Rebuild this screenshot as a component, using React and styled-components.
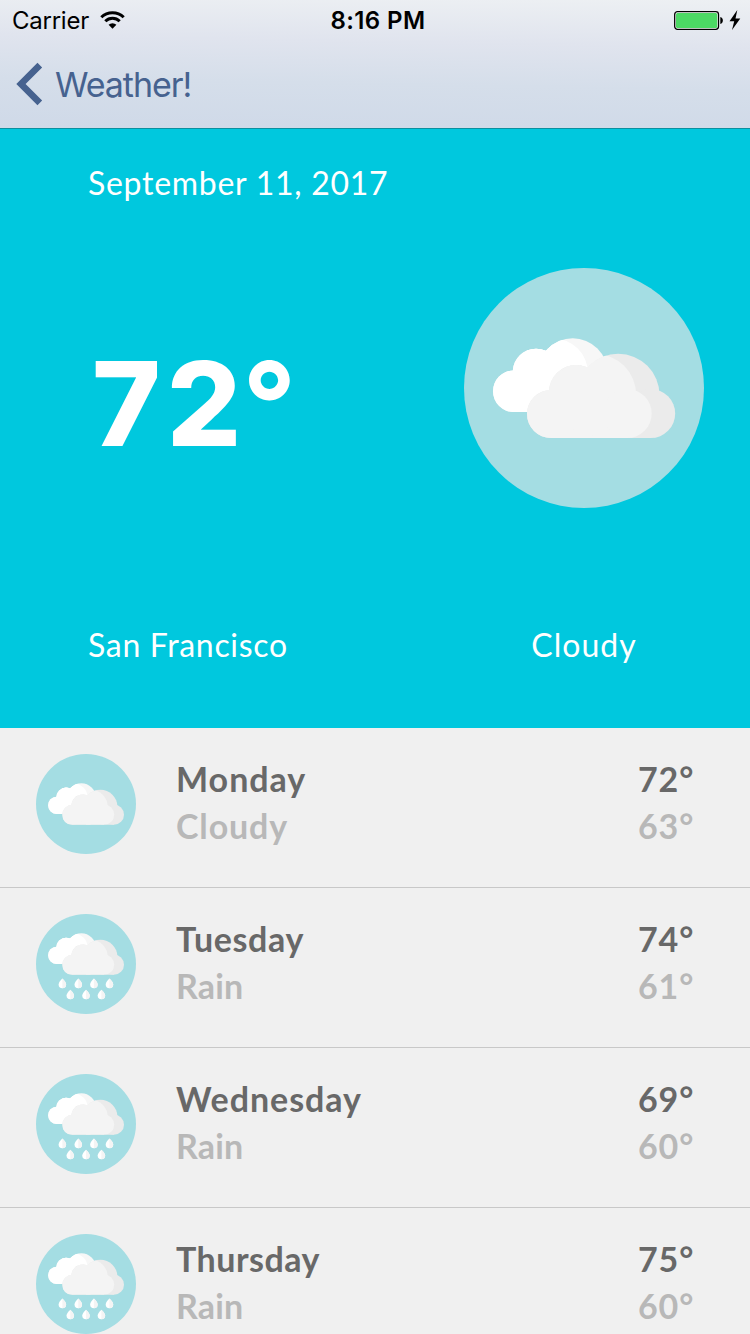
import React from 'react';
import styled, { createGlobalStyle } from 'styled-components';

const GlobalStyle = createGlobalStyle`
  * { box-sizing: border-box; }
  html, body { margin: 0; padding: 0; }
  body { width: 750px; height: 1334px; overflow: hidden; background: #f0f0f0; }
`;

const Screen = styled.div`
  width: 750px;
  height: 1334px;
  overflow: hidden;
  display: flex;
  flex-direction: column;
  font-family: Lato, "Open Sans", sans-serif;
`;

const Header = styled.header`
  flex: none;
  height: 129px;
  background: linear-gradient(181deg, #edf0f3 0%, #e0e4ee 34%, #d5deea 64%, #cfd9e8 100%);
  border-bottom: 1px solid #0d8f9f;
  font-family: Inter, "Liberation Sans", sans-serif;
`;

const StatusBar = styled.div`
  height: 41px;
  display: grid;
  grid-template-columns: 1fr auto 1fr;
  align-items: center;
  padding: 1px 9px 0 12px;
  color: #000;
  font-size: 24px;
  line-height: 40px;
`;

const StatusGroup = styled.div`
  display: flex;
  align-items: center;
  justify-content: ${(p) => (p.$end ? 'flex-end' : 'flex-start')};
  gap: ${(p) => p.$gap}px;

  svg {
    margin-top: -3px;
  }
`;

const Carrier = styled.span`
  letter-spacing: -0.25px;
`;

const Clock = styled.span`
  font-weight: 600;
  letter-spacing: 0.4px;
  padding-left: 3px;
`;

const BackBar = styled.nav`
  height: 87px;
  display: flex;
  align-items: center;
  padding-left: 16px;
  gap: 12px;
  color: #46628f;

  svg {
    margin-top: -2px;
  }
`;

const BackLabel = styled.span`
  font-size: 34px;
  line-height: 40px;
  letter-spacing: -1.05px;
  padding-top: 1px;
`;

const Today = styled.section`
  flex: none;
  height: 599px;
  background: #00c8de;
  color: #fff;
  padding: 30px 46px 0 88px;
  display: flex;
  flex-direction: column;
`;

const Caption = styled.div`
  font-size: 32px;
  line-height: 48px;
  letter-spacing: ${(p) => p.$track}px;
  white-space: nowrap;
`;

const TodayMain = styled.div`
  height: 414px;
  display: flex;
  align-items: center;
  justify-content: space-between;
  padding-bottom: 52px;
`;

const BigTemp = styled.div`
  display: flex;
  padding: 32px 0 0 4px;
  font-family: Inter, Lato, sans-serif;
  font-weight: 800;
  font-size: 117px;
  line-height: 120px;
  letter-spacing: 6px;
`;

const Degree = styled.span`
  margin-left: -5px;
  font-weight: 700;
  letter-spacing: 0;
`;

const TodayFoot = styled.div`
  display: flex;
  justify-content: space-between;
`;

const Condition = styled.div`
  width: 240px;
  display: flex;
  justify-content: center;
`;

const Row = styled.div`
  flex: none;
  height: 160px;
  background: #f0f0f0;
  border-bottom: 1px solid #c8c8c8;
  display: flex;
  align-items: flex-start;
  padding: 26px 55px 0 36px;
`;

const DayInfo = styled.div`
  flex: 1;
  padding: 1px 0 0 40px;
`;

const Temps = styled.div`
  display: flex;
  flex-direction: column;
  align-items: flex-start;
  width: 57px;
  padding-top: 1px;
`;

const Line = styled.div`
  font-size: 34px;
  font-weight: 700;
  line-height: 47px;
  white-space: nowrap;
  color: ${(p) => (p.$muted ? '#b8b8b8' : '#686868')};
  letter-spacing: ${(p) => p.$track}px;
`;

const FrontShape = () => (
  <>
    <circle cx="87" cy="146" r="24" />
    <circle cx="112" cy="124" r="27" />
    <circle cx="154.3" cy="127" r="41.2" />
    <circle cx="186.8" cy="145.6" r="24.4" />
    <path d="M87 130H187V170H87Z" />
  </>
);

const BackShape = () => (
  <>
    <circle cx="49.8" cy="123.2" r="20.8" />
    <circle cx="72" cy="104" r="23.3" />
    <circle cx="108.7" cy="105.3" r="35" />
    <path d="M49 110H110V144H49Z" />
  </>
);

const DROPS = [
  [63.3, 155], [101.5, 155], [139, 155], [176.3, 155],
  [82.3, 181.5], [120, 181.5], [157, 181.5],
];

function WeatherIcon({ size, id, rain }) {
  return (
    <svg width={size} height={size} viewBox="0 0 240 240">
      <defs>
        <clipPath id={`${id}-front`}><FrontShape /></clipPath>
        <clipPath id={`${id}-back`}><BackShape /></clipPath>
      </defs>
      <circle cx="120" cy="120" r="120" fill="#a4dde3" />
      <g transform={rain ? 'translate(0 -24)' : undefined}>
        <g fill="#f7f7f7"><BackShape /></g>
        <g clipPath={`url(#${id}-back)`} fill="#fff">
          <path d="M20 60H89V150H20Z" />
          <circle cx="89" cy="105.3" r="35" />
        </g>
        <g fill="#ebebeb"><FrontShape /></g>
        <g clipPath={`url(#${id}-front)`} fill="#f4f4f4">
          <path d="M60 80H131V172H60Z" />
          <path d="M120 128H163V172H120Z" />
          <circle cx="131" cy="127" r="41.2" />
          <circle cx="163.3" cy="145.6" r="24.4" />
        </g>
      </g>
      {rain && DROPS.map(([x, y]) => (
        <g key={`${x}-${y}`} transform={`translate(${x} ${y})`}>
          <path d="M0 0C5 5 9 10 9 14.200A9 9 0 0 1 -9 14.200C-9 10 -5 5 0 0Z" fill="#fff" />
          <path d="M0 0C5 5 9 10 9 14.200A9 9 0 0 1 0 23.200Z" fill="#f4f4f4" />
        </g>
      ))}
    </svg>
  );
}

const WifiIcon = () => (
  <svg width="25" height="18" viewBox="0 0 25 18" fill="none" stroke="#000" strokeWidth="3">
    <path d="M1.300 6.200A16 16 0 0 1 23.700 6.200" />
    <path d="M5.300 10.300A10.300 10.300 0 0 1 19.700 10.300" />
    <path d="M12.500 17.800L8.600 13.800A5.600 5.600 0 0 1 16.400 13.800Z" fill="#000" stroke="none" />
  </svg>
);

const BatteryIcon = () => (
  <svg width="50" height="20" viewBox="0 0 50 20">
    <rect x="0.700" y="1.700" width="43.800" height="17.600" rx="2.800" fill="#fff" stroke="#000" strokeWidth="1.300" />
    <rect x="2" y="3" width="41.200" height="15" rx="1.500" fill="#4cd964" />
    <path d="M46.300 7C49.700 7.500 49.700 13.500 46.300 14Z" fill="#000" />
  </svg>
);

const BoltIcon = () => (
  <svg width="12" height="20" viewBox="0 0 12 20">
    <path d="M8.300 0L0.500 11.200H5.200L3 20L11.300 8.400H6.500Z" fill="#000" />
  </svg>
);

const ChevronIcon = () => (
  <svg width="27" height="44" viewBox="0 0 27 44" fill="none" stroke="currentColor" strokeWidth="6.600">
    <path d="M23.800 3.200L5 22L23.800 40.800" />
  </svg>
);

const DAYS = [
  { day: 'Monday', text: 'Cloudy', high: '72°', low: '63°', dayTrack: 1, textTrack: 0.85 },
  { day: 'Tuesday', text: 'Rain', high: '74°', low: '61°', dayTrack: 0.65, textTrack: 0.2 },
  { day: 'Wednesday', text: 'Rain', high: '69°', low: '60°', dayTrack: 0.95, textTrack: 0.2 },
  { day: 'Thursday', text: 'Rain', high: '75°', low: '60°', dayTrack: 0.5, textTrack: 0.2 },
];

export default function App() {
  return (
    <Screen>
      <GlobalStyle />
      <Header>
        <StatusBar>
          <StatusGroup $gap={11}>
            <Carrier>Carrier</Carrier>
            <WifiIcon />
          </StatusGroup>
          <Clock>8:16 PM</Clock>
          <StatusGroup $end $gap={5}>
            <BatteryIcon />
            <BoltIcon />
          </StatusGroup>
        </StatusBar>
        <BackBar>
          <ChevronIcon />
          <BackLabel>Weather!</BackLabel>
        </BackBar>
      </Header>
      <Today>
        <Caption $track={0.72}>September 11, 2017</Caption>
        <TodayMain>
          <BigTemp>72<Degree>°</Degree></BigTemp>
          <WeatherIcon size={240} id="today" />
        </TodayMain>
        <TodayFoot>
          <Caption $track={0.68}>San Francisco</Caption>
          <Condition><Caption $track={1}>Cloudy</Caption></Condition>
        </TodayFoot>
      </Today>
      {DAYS.map((d) => (
        <Row key={d.day}>
          <WeatherIcon size={100} id={d.day} rain={d.text === 'Rain'} />
          <DayInfo>
            <Line $track={d.dayTrack}>{d.day}</Line>
            <Line $muted $track={d.textTrack}>{d.text}</Line>
          </DayInfo>
          <Temps>
            <Line $track={0.9}>{d.high}</Line>
            <Line $muted $track={0.9}>{d.low}</Line>
          </Temps>
        </Row>
      ))}
    </Screen>
  );
}
